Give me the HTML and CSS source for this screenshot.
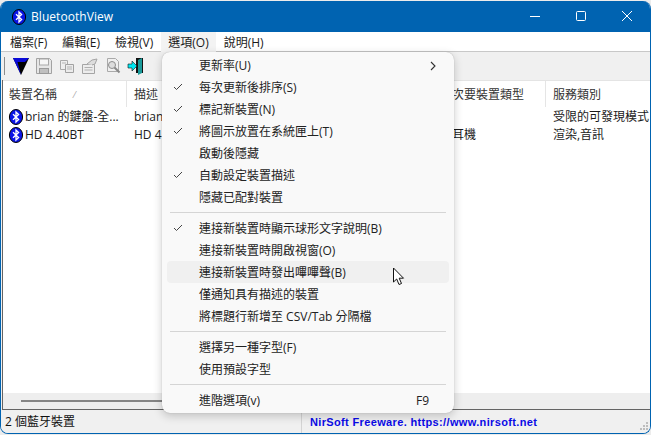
FILE: index.html
```html
<!DOCTYPE html>
<html lang="zh-Hant">
<head>
<meta charset="utf-8">
<title>BluetoothView</title>
<link rel="stylesheet" href="styles.css">
</head>
<body>
<svg class="defs" width="0" height="0" aria-hidden="true">
  <symbol id="bt" viewBox="0 0 16 16">
    <ellipse cx="8" cy="8" rx="6.6" ry="7.5" fill="#0a14e6" stroke="#000" stroke-width="1"/>
    <path d="M5 5.2 10.6 10.6 8 13V3l2.6 2.4L5 10.8" fill="none" stroke="#fff" stroke-width="1.3"/>
  </symbol>
</svg>
<div class="window">
  <header class="titlebar">
    <svg class="app-icon"><use href="#bt"/></svg>
    <span class="app-title">BluetoothView</span>
    <div class="caption">
      <svg class="cap-btn" viewBox="0 0 46 32"><path d="M18 15.500h10" stroke="#fff" fill="none"/></svg>
      <svg class="cap-btn" viewBox="0 0 46 32"><rect x="18.500" y="10.500" width="9" height="9" rx="1" stroke="#fff" fill="none"/></svg>
      <svg class="cap-btn" viewBox="0 0 46 32"><path d="M18 10l10 10M28 10 18 20" stroke="#fff" fill="none"/></svg>
    </div>
  </header>
  <nav class="menubar">
    <span class="mb-item">檔案(F)</span>
    <span class="mb-item">編輯(E)</span>
    <span class="mb-item">檢視(V)</span>
    <span class="mb-item mb-open">選項(O)</span>
    <span class="mb-item">說明(H)</span>
  </nav>
  <div class="toolbar">
    <span class="tb-sep"></span>
    <svg class="tb" viewBox="0 0 18 20"><path d="M1 2h16L9 19z" fill="#000"/><path d="M1 2h16l-4 4H5.500L9 19z" fill="#0a0ad8"/></svg>
    <svg class="tb" viewBox="0 0 18 20"><path d="M1.500 2.500h13l2 2v13h-15z" fill="#e6e6e6" stroke="#a2a2a2"/><rect x="4.500" y="3" width="9" height="6" fill="#f6f6f6" stroke="#a8a8a8"/><rect x="4.500" y="12.500" width="9" height="5" fill="#c0c0c0" stroke="#9a9a9a"/></svg>
    <svg class="tb" viewBox="0 0 18 20"><path d="M2.500 4.500h7v9h-7z" fill="#eee" stroke="#aaa"/><path d="M7.500 8.500h8v8h-8z" fill="#ececec" stroke="#a2a2a2"/><path d="M9 11h5M9 13h5M4 7h4" stroke="#b5b5b5"/></svg>
    <svg class="tb" viewBox="0 0 18 20"><path d="M1.500 8.500h12v9h-12z" fill="#ededed" stroke="#a5a5a5"/><path d="M3.500 11.500h8M3.500 14h8" stroke="#b0b0b0"/><path d="M6 8l5-4 5-1-2 5-3 1" fill="#ddd" stroke="#a5a5a5"/></svg>
    <svg class="tb" viewBox="0 0 18 20"><path d="M3.500 2.500h8l3 3v10h-11z" fill="#f0f0f0" stroke="#aaa"/><circle cx="8" cy="9" r="3.500" fill="#ddd" stroke="#8e8e8e"/><path d="M10.500 11.500l5 5" stroke="#8a8a8a" stroke-width="2"/></svg>
    <svg class="tb" viewBox="0 0 18 20"><path d="M9 2h7v15H9z" fill="#111"/><path d="M11 4l4-2v15l-4 2z" fill="#1a9a9a"/><path d="M1 8h4V5l5 5-5 5v-3H1z" fill="#00e6f0" stroke="#111" stroke-width=".6"/></svg>
  </div>
  <main class="list">
    <div class="list-head">
      <div class="col col-name">裝置名稱<span class="sort">⁄</span></div>
      <div class="col col-desc">描述</div>
      <div class="col col-minor">次要裝置類型</div>
      <div class="col col-svc">服務類別</div>
    </div>
    <div class="row">
      <div class="col col-name"><svg class="row-icon"><use href="#bt"/></svg>brian 的鍵盤-全...</div>
      <div class="col col-desc">brian</div>
      <div class="col col-minor"></div>
      <div class="col col-svc">受限的可發現模式</div>
    </div>
    <div class="row">
      <div class="col col-name"><svg class="row-icon"><use href="#bt"/></svg>HD 4.40BT</div>
      <div class="col col-desc">HD 4</div>
      <div class="col col-minor">耳機</div>
      <div class="col col-svc">渲染,音訊</div>
    </div>
    <div class="spacer"></div>
    <div class="hscroll"><span class="thumb"></span></div>
  </main>
  <footer class="status">
    <div class="st-left">2 個藍牙裝置</div>
    <div class="st-right">NirSoft Freeware. https://www.nirsoft.net</div>
    <svg class="grip" viewBox="0 0 12 12"><path d="M9 2h2v2H9zM6 5h2v2H6zM9 5h2v2H9zM3 8h2v2H3zM6 8h2v2H6zM9 8h2v2H9z" fill="#bdbdbd"/></svg>
  </footer>
  <div class="menu">
    <div class="mi"><span class="chk"></span><span class="lbl">更新率(U)</span><svg class="arrow" viewBox="0 0 8 10"><path d="M2 1l4 4-4 4" fill="none" stroke="#333" stroke-width="1.100"/></svg></div>
    <div class="mi"><svg class="chk" viewBox="0 0 10 8"><path d="M1 4l2.500 2.500L9 1" fill="none" stroke="#444"/></svg><span class="lbl">每次更新後排序(S)</span></div>
    <div class="mi"><svg class="chk" viewBox="0 0 10 8"><path d="M1 4l2.500 2.500L9 1" fill="none" stroke="#444"/></svg><span class="lbl">標記新裝置(N)</span></div>
    <div class="mi"><svg class="chk" viewBox="0 0 10 8"><path d="M1 4l2.500 2.500L9 1" fill="none" stroke="#444"/></svg><span class="lbl">將圖示放置在系統匣上(T)</span></div>
    <div class="mi"><span class="chk"></span><span class="lbl">啟動後隱藏</span></div>
    <div class="mi"><svg class="chk" viewBox="0 0 10 8"><path d="M1 4l2.500 2.500L9 1" fill="none" stroke="#444"/></svg><span class="lbl">自動設定裝置描述</span></div>
    <div class="mi"><span class="chk"></span><span class="lbl">隱藏已配對裝置</span></div>
    <div class="msep"></div>
    <div class="mi"><svg class="chk" viewBox="0 0 10 8"><path d="M1 4l2.500 2.500L9 1" fill="none" stroke="#444"/></svg><span class="lbl">連接新裝置時顯示球形文字說明(B)</span></div>
    <div class="mi"><span class="chk"></span><span class="lbl">連接新裝置時開啟視窗(O)</span></div>
    <div class="mi mi-hover"><span class="chk"></span><span class="lbl">連接新裝置時發出嗶嗶聲(B)</span></div>
    <div class="mi"><span class="chk"></span><span class="lbl">僅通知具有描述的裝置</span></div>
    <div class="mi"><span class="chk"></span><span class="lbl">將標題行新增至 CSV/Tab 分隔檔</span></div>
    <div class="msep"></div>
    <div class="mi"><span class="chk"></span><span class="lbl">選擇另一種字型(F)</span></div>
    <div class="mi"><span class="chk"></span><span class="lbl">使用預設字型</span></div>
    <div class="msep"></div>
    <div class="mi"><span class="chk"></span><span class="lbl">進階選項(v)</span><span class="key">F9</span></div>
  </div>
  <svg class="cursor" viewBox="0 0 14 20"><path d="M1.500 1v14l3.200-3 2.300 5.500 2.500-1-2.300-5.300h4.300z" fill="#fff" stroke="#111"/></svg>
</div>
</body>
</html>
```
FILE: styles.css
```css
html, body {
  margin: 0;
  height: 100%;
  background: #ececec;
  overflow: hidden;
}
.defs { position: absolute; }
.window {
  position: relative;
  box-sizing: border-box;
  width: 651px;
  height: 433px;
  margin-top: 1px;
  display: flex;
  flex-direction: column;
  background: #f0f0f0;
  border: 1px solid #0063b1;
  border-top: 0;
  border-radius: 8px;
  overflow: hidden;
  font: 12px/16px "Open Sans", "Noto Sans CJK TC", sans-serif;
  color: #1a1a1a;
}
.titlebar {
  flex: none;
  height: 31px;
  display: flex;
  align-items: center;
  background: #0063b1;
  color: #fff;
}
.app-icon { width: 16px; height: 16px; margin-left: 10px; }
.app-title { margin-left: 4px; font: 12px/16px "Open Sans", sans-serif; letter-spacing: 0.05px; }
.caption { margin-left: auto; display: flex; }
.cap-btn { width: 46px; height: 32px; }
.menubar {
  flex: none;
  height: 19px;
  padding-left: 2px;
  display: flex;
  align-items: center;
  background: #fff;
  border-bottom: 1px solid #c8c8c8;
}
.mb-item { padding: 3px 7px 1px; margin-right: 1px; white-space: nowrap; }
.mb-open { background: #f3f3f3; }
.toolbar {
  flex: none;
  height: 28px;
  padding-left: 3px;
  display: flex;
  align-items: center;
  gap: 5px;
  background: #f0f0f0;
  box-sizing: border-box;
}
.tb-sep { width: 1px; height: 18px; background: #8c8c8c; margin-right: 2px; }
.tb { width: 18px; height: 20px; }
.list {
  flex: 1;
  min-height: 0;
  display: flex;
  flex-direction: column;
  background: #fff;
  margin-left: 1px;
  border-left: 1px solid #646464;
  border-bottom: 1px solid #646464;
}
.list-head {
  flex: none;
  height: 26px;
  display: flex;
  align-items: center;
  border-top: 1px solid #e4e4e4;
  color: #333;
}
.row {
  flex: none;
  height: 18px;
  display: flex;
  align-items: center;
  white-space: nowrap;
}
.col { box-sizing: border-box; height: 100%; display: flex; align-items: center; padding-left: 7px; white-space: nowrap; overflow: hidden; }
.col-name { width: 124px; position: relative; padding-left: 6px; }
.col-desc { width: 314px; }
.col-minor { width: 105px; padding-left: 11px; }
.col-svc { flex: 1; }
.list-head .col { padding-top: 2px; }
.row .col { padding-top: 1px; }
.list-head .col-name, .list-head .col-minor { border-right: 1px solid #e5e5e5; }
.row .col-name { padding-left: 5px; }
.sort { margin-left: 17px; color: #999; font-size: 9px; }
.row-icon { width: 16px; height: 16px; margin-right: 1px; flex: none; }
.spacer { flex: 1; }
.hscroll {
  flex: none;
  height: 16px;
  display: flex;
  align-items: center;
  padding-left: 18px;
  background: #eeeeee;
}
.thumb { width: 420px; height: 2px; background: #858585; }
.status {
  flex: none;
  height: 23px;
  box-sizing: border-box;
  display: flex;
  align-items: center;
  position: relative;
  background: #f0f0f0;
}
.st-left { width: 301px; padding-left: 4px; box-sizing: border-box; height: 100%; border-right: 1px solid #d4d4d4; display: flex; align-items: center; color: #111; }
.st-right { padding-left: 8px; font: bold 11px/16px "Liberation Sans", sans-serif; letter-spacing: 0.35px; color: #0a0ae6; white-space: nowrap; }
.grip { position: absolute; right: 1px; bottom: 1px; width: 12px; height: 12px; }
.menu {
  position: absolute;
  left: 161px;
  top: 51px;
  width: 292px;
  box-sizing: border-box;
  padding: 2px 5px;
  background: #f9f9f9;
  border-radius: 8px;
  box-shadow: 0 3px 10px rgba(0, 0, 0, 0.2), 0 0 1px rgba(0, 0, 0, 0.3);
}
.mi {
  height: 22px;
  display: flex;
  align-items: center;
  border-radius: 4px;
  padding-right: 12px;
  white-space: nowrap;
  color: #222;
}
.mi-hover { background: #f0f0f0; }
.chk { width: 10px; height: 8px; margin-left: 6px; margin-right: 16px; flex: none; }
.lbl { flex: 1; padding-top: 2px; }
.arrow { width: 8px; height: 10px; margin-top: 1px; }
.key { margin-right: 8px; padding-top: 2px; }
.msep { height: 1px; margin: 4px 3px 4px; background: #d5d5d5; }
.cursor { position: absolute; left: 391px; top: 266px; width: 14px; height: 20px; }
```
